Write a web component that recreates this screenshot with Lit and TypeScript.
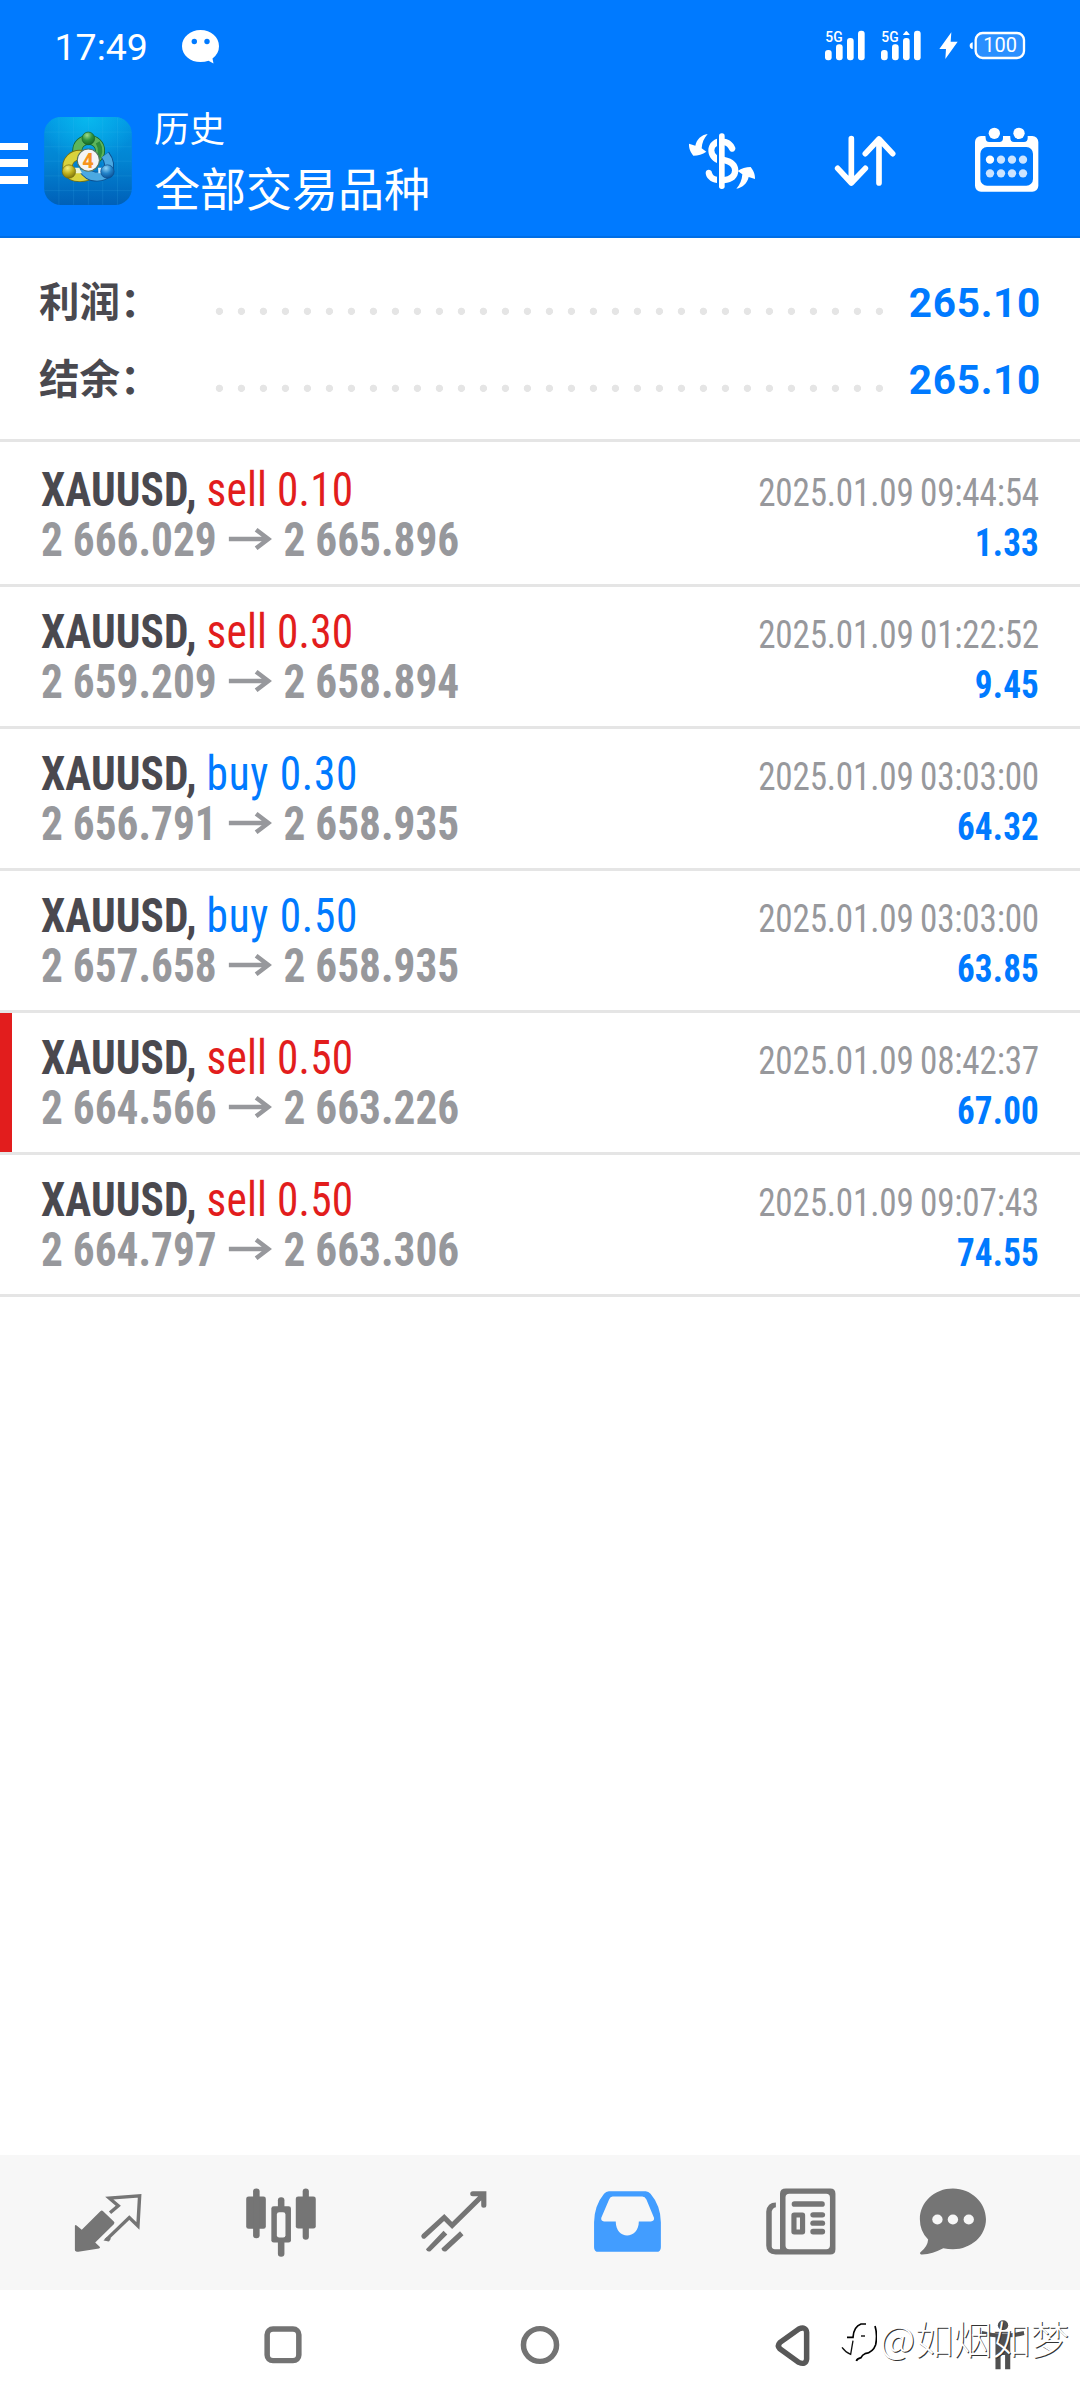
import { LitElement, html, svg, css, nothing } from "lit";
import { customElement, property } from "lit/decorators.js";
import { classMap } from "lit/directives/class-map.js";

interface Deal {
  side: "sell" | "buy";
  volume: string;
  open: string;
  close: string;
  time: string;
  profit: string;
  marked?: boolean;
}

const DEALS: Deal[] = [
  { side: "sell", volume: "0.10", open: "2 666.029", close: "2 665.896", time: "2025.01.09 09:44:54", profit: "1.33" },
  { side: "sell", volume: "0.30", open: "2 659.209", close: "2 658.894", time: "2025.01.09 01:22:52", profit: "9.45" },
  { side: "buy", volume: "0.30", open: "2 656.791", close: "2 658.935", time: "2025.01.09 03:03:00", profit: "64.32" },
  { side: "buy", volume: "0.50", open: "2 657.658", close: "2 658.935", time: "2025.01.09 03:03:00", profit: "63.85" },
  { side: "sell", volume: "0.50", open: "2 664.566", close: "2 663.226", time: "2025.01.09 08:42:37", profit: "67.00", marked: true },
  { side: "sell", volume: "0.50", open: "2 664.797", close: "2 663.306", time: "2025.01.09 09:07:43", profit: "74.55" },
];

@customElement("status-bar")
class StatusBar extends LitElement {
  static styles = css`
    :host { display: flex; height: 92px; box-sizing: border-box; padding: 24px 35px 0 54.500px; color: #fff; }
    .time { font: 400 37.500px/46px Roboto, sans-serif; width: 127.500px; }
    .chat { width: 40px; height: 42px; }
    .system { margin-left: auto; width: 230px; height: 42px; }
    text { fill: #fff; font-family: Roboto, sans-serif; }
  `;

  bars(x: number, split = false) {
    return svg`
      <text x=${x + 1} y="125" font-size="45" font-weight="500" textLength="52" lengthAdjust="spacingAndGlyphs">5G</text>
      <rect x=${x} y="150" width="20" height="31" rx="9" fill="#fff"/>
      <rect x=${x + 33} y="133" width="20" height="48" rx="9" fill="#fff"/>
      <rect x=${x + 66} y="114" width="20" height="67" rx="9" fill="#fff"/>
      <rect x=${x + 99} y="92" width="20" height="89" rx="9" fill="#fff"/>
      ${split ? svg`<path d="M${x + 66} 105q0 -3 4 -6q4 -6 6 -6t6 6q4 3 4 6z" fill="#fff"/>` : nothing}`;
  }

  render() {
    return html`
      <span class="time">17:49</span>
      <svg class="chat" viewBox="0 0 40 42">
        <path fill="#fff" d="M18.5 6C8.500 6 0 13 0 22.200S8.500 38 18.500 38q4.500 0 8 -1.200L31.500 39.500l-1 -5Q37 29.500 37 22.200C37 13 29 6 18.500 6z"/>
        <circle cx="12.300" cy="17.500" r="2.700" fill="#007aff"/>
        <circle cx="25" cy="17.500" r="2.700" fill="#007aff"/>
      </svg>
      <svg class="system" viewBox="525 72 690 126">
        ${this.bars(555)} ${this.bars(723, true)}
        <path fill="#fff" d="M934 97L898 147h20l-2 30L953 125H932z"/>
        <path fill="#fff" d="M998 127q-9 2 -9 10t9 10z"/>
        <rect x="1007" y="99" width="145" height="75" rx="21" fill="#2a8fff" stroke="#fff" stroke-width="7"/>
        <text x="1030" y="157" font-size="60" font-weight="450" textLength="101" lengthAdjust="spacingAndGlyphs">100</text>
      </svg>`;
  }
}

@customElement("history-header")
class HistoryHeader extends LitElement {
  static styles = css`
    :host { display: flex; height: 146px; box-sizing: border-box; border-bottom: 2px solid #006ee5; color: #fff; padding-right: 36px; }
    .menu { width: 28px; height: 41px; margin-top: 50.500px; display: flex; flex-direction: column; justify-content: space-between; }
    .bar { height: 7.500px; background: #fff; }
    .logo { width: 88px; height: 88px; margin: 25px 0 0 16px; }
    .titles { margin: 13px auto 0 22px; font-family: Roboto, "Noto Sans CJK SC", sans-serif; }
    .caption { font-size: 35.500px; line-height: 50px; }
    .title { font-size: 46px; line-height: 70px; }
    .actions { display: flex; gap: 70px; padding-top: 34px; }
    .action { height: 70px; display: block; }
    .w76 { width: 76px; }
    .w70 { width: 70px; }
    .w74 { width: 74px; }
  `;

  render() {
    return html`
      <div class="menu"><div class="bar"></div><div class="bar"></div><div class="bar"></div></div>
      <svg class="logo" viewBox="43 52 262 263">
        <defs>
          <linearGradient id="bg" x1="0" y1="0" x2="0" y2="1">
            <stop offset="0" stop-color="#0298e4"/><stop offset=".5" stop-color="#0284d2"/><stop offset="1" stop-color="#0060b8"/>
          </linearGradient>
          <radialGradient id="glow" cx=".5" cy="0" r=".55">
            <stop offset="0" stop-color="#08b8ee"/><stop offset="1" stop-color="#08b8ee" stop-opacity="0"/>
          </radialGradient>
          <radialGradient id="g" cx=".4" cy=".25" r=".8"><stop offset="0" stop-color="#9fdc8c"/><stop offset=".5" stop-color="#2f9440"/><stop offset="1" stop-color="#126322"/></radialGradient>
          <radialGradient id="y" cx=".4" cy=".25" r=".8"><stop offset="0" stop-color="#f4ef7c"/><stop offset=".5" stop-color="#bfb11f"/><stop offset="1" stop-color="#756c0a"/></radialGradient>
          <radialGradient id="b" cx=".4" cy=".25" r=".8"><stop offset="0" stop-color="#90d3f7"/><stop offset=".5" stop-color="#2383c9"/><stop offset="1" stop-color="#0a4c90"/></radialGradient>
        </defs>
        <rect x="43" y="52" width="262" height="263" rx="50" fill="url(#bg)"/>
        <rect x="43" y="52" width="262" height="263" rx="50" fill="url(#glow)"/>
        <path d="M44 97H304M44 141H304M44 184H304M44 228H304M44 272H304M87 53V314M131 53V314M175 53V314M218 53V314M262 53V314" stroke="#4fc0ef" stroke-opacity=".22" stroke-width="2"/>
        <ellipse cx="176" cy="152" rx="34" ry="32" fill="none" stroke="#17652b" stroke-width="30"/>
        <ellipse cx="176" cy="152" rx="34" ry="32" fill="none" stroke="#5cb55c" stroke-width="25"/>
        <path d="M203 128q16 28 -4 55" fill="none" stroke="#2e8d3c" stroke-width="13"/>
        <path d="M165 168C128 158 106 185 115 213Q122 231 150 231Q172 231 190 218" fill="none" stroke="#77700e" stroke-width="31"/>
        <path d="M165 168C128 158 106 185 115 213Q122 231 150 231Q172 231 190 218" fill="none" stroke="#d9d23c" stroke-width="26"/>
        <path d="M225 165Q244 190 233 216Q222 232 195 230Q173 228 159 206" fill="none" stroke="#0c4f8f" stroke-width="29"/>
        <path d="M225 165Q244 190 233 216Q222 232 195 230Q173 228 159 206" fill="none" stroke="#4ba9e2" stroke-width="24"/>
        <path d="M126 204h22l8 16h-22z" fill="#eef6d8"/><path d="M204 204h22l-6 16h-15z" fill="#d8f0ff"/>
        <circle cx="175" cy="116" r="19" fill="url(#g)" stroke="#186126" stroke-width="2"/>
        <circle cx="117" cy="215" r="20" fill="url(#y)" stroke="#726a0d" stroke-width="2"/>
        <circle cx="232" cy="215" r="20" fill="url(#b)" stroke="#0d4d8c" stroke-width="2"/>
        <circle cx="175" cy="181" r="33" fill="#f4f4f6" stroke="#54735e" stroke-width="3"/>
        <text x="174" y="203" text-anchor="middle" font-family="Roboto, sans-serif" font-weight="800" font-size="60" fill="#f7941e">4</text>
      </svg>
      <div class="titles">
        <div class="caption">历史</div>
        <div class="title">全部交易品种</div>
      </div>
      <div class="actions">
        <svg class="action w76" viewBox="0 0 228 210" fill="#fff">
          <rect x="105" y="22" width="17" height="167" rx="8"/>
          <path d="M99 38C82 44 73 57 73 73S82 104 99 111V88Q91 82 91 73T99 60z"/>
          <path d="M120 38C138 40 148 50 154 65C156 74 143 84 136 72Q131 60 120 58z"/>
          <path d="M120 92C150 98 163 114 163 133C163 156 147 170 120 172V153Q144 150 144 133Q144 118 120 112z"/>
          <path d="M99 171C78 168 66 155 65 141C65 129 82 128 84 140Q87 150 99 152z"/>
          <path d="M71 24C52 27 38 40 34 59L15 53C14 68 21 80 28 89C42 89 56 85 67 77L53 67C54 50 60 36 71 24z"/>
          <path transform="rotate(180 114 106)" d="M71 24C52 27 38 40 34 59L15 53C14 68 21 80 28 89C42 89 56 85 67 77L53 67C54 50 60 36 71 24z"/>
        </svg>
        <svg class="action w70" viewBox="570 378 210 210" fill="none" stroke="#fff" stroke-width="17" stroke-linecap="round" stroke-linejoin="round">
          <path d="M634 416V548M593 505L634 549L676 505M717 549V418M676 461L717 417L758 461"/>
        </svg>
        <svg class="action w74" viewBox="990 378 222 210">
          <rect x="1005" y="408" width="190" height="167" rx="18" fill="#fff"/>
          <rect x="1021" y="441" width="158" height="116" rx="20" fill="#007aff"/>
          <path d="M1035 400H1089V414Q1089 426 1078 426H1048Q1037 426 1037 414zM1110 400H1163V414Q1163 426 1152 426H1122Q1111 426 1111 414z" fill="#007aff"/>
          <circle cx="1063" cy="400" r="17" fill="#fff"/><circle cx="1137" cy="400" r="17" fill="#fff"/>
          ${[0, 1, 2, 3, 4, 5, 6, 7].map(i => svg`<circle cx=${1050 + (i % 4) * 33} cy=${i < 4 ? 479 : 520} r="12.500" fill=${i ? "#cce4ff" : "#fff"}/>`)}
        </svg>
      </div>`;
  }
}

@customElement("summary-row")
class SummaryRow extends LitElement {
  @property() label = "";
  @property() value = "";
  static styles = css`
    :host { display: flex; height: 77px; align-items: center; padding: 0 39px 0 39px; }
    .label { width: 169px; padding-bottom: 6px; font: 700 40.500px/60px "Noto Sans CJK SC", sans-serif; color: #4a494f; white-space: nowrap; }
    .dots { width: 682px; height: 77px; background: radial-gradient(circle at 11.400px 47.300px, #e5e5e5 3.300px, transparent 4px) repeat-x; background-size: 22px 77px; }
    .value { margin-left: auto; font: 700 40.500px/60px Roboto, sans-serif; letter-spacing: .700px; color: #007aff; }
  `;
  render() {
    return html`<span class="label">${this.label}</span><span class="dots"></span><span class="value">${this.value}</span>`;
  }
}

@customElement("deal-row")
class DealRow extends LitElement {
  @property({ attribute: false }) deal!: Deal;
  static styles = css`
    :host { display: block; border-bottom: 3px solid #e5e5e5; }
    .row { display: flex; justify-content: space-between; height: 139px; box-sizing: border-box; padding: 19.500px 41px 0 41px; font-family: Roboto, sans-serif; font-stretch: condensed; line-height: 50px; white-space: nowrap; }
    .row.marked { border-left: 12px solid #e21d1d; padding-left: 29px; }
    .left { font-size: 48px; transform: scaleX(.902); transform-origin: left; }
    .right { font-size: 39px; padding-top: 3px; text-align: right; transform: scaleX(.9); transform-origin: right; }
    .symbol { font-weight: 700; color: #4a494f; letter-spacing: .100px; }
    .side { font-weight: 440; letter-spacing: .150px; }
    .sell { color: #e21d1d; }
    .buy { color: #007aff; letter-spacing: .800px; }
    .prices { display: flex; align-items: center; font-weight: 700; color: #97989c; }
    .arrow { width: 48px; height: 22px; margin: 0 13px; padding-bottom: 2px; }
    .time { color: #97989c; font-weight: 430; letter-spacing: -.200px; word-spacing: -1.500px; }
    .profit { font-weight: 700; color: #007aff; letter-spacing: .200px; }
  `;
  render() {
    const d = this.deal;
    return html`
      <div class=${classMap({ row: true, marked: !!d.marked })}>
        <div class="left">
          <div><span class="symbol">XAUUSD,</span> <span class="side ${d.side}">${d.side} ${d.volume}</span></div>
          <div class="prices"><span>${d.open}</span>
            <svg class="arrow" viewBox="0 0 126 66" preserveAspectRatio="none"><path d="M0 33H114M80 5L116 33L80 61" fill="none" stroke="#97989c" stroke-width="13"/></svg>
            <span>${d.close}</span></div>
        </div>
        <div class="right">
          <div class="time">${d.time}</div>
          <div class="profit">${d.profit}</div>
        </div>
      </div>`;
  }
}

const TABS = [
  { x: 199, art: svg`
    <path d="M219 256Q220 252 224 255L239 268L293 212Q297 208 301 212L332 243Q336 247 332 251L278 306L291 319Q294 322 289 324L229 334Q219 334 219 328z"/>
    <path d="M321 217L345 196L319 173L407 166L402 256L377 231L309 299" fill="none" stroke="#757575" stroke-width="10"/><path d="M302 300L318 303L324 294L311 290z"/>` },
  { x: 699.9, art: svg`
    <rect x="715" y="168" width="57" height="97" rx="7"/><rect x="735" y="144" width="19" height="149" rx="9"/>
    <rect x="859" y="168" width="58" height="96" rx="7"/><rect x="879" y="144" width="18" height="154" rx="9"/>
    <rect x="788" y="197" width="57" height="109" rx="7"/><rect x="807" y="170" width="19" height="179" rx="9"/>
    <rect x="804" y="215" width="25" height="76" rx="7" fill="#f7f7f7"/>` },
  { x: 1202.3, art: svg`
    <g fill="none" stroke="#757575" stroke-width="15" stroke-linecap="round">
    <path d="M1231 287L1290 231L1313 255L1402 164M1373 160H1405V194"/></g>
    <path d="M1288 271L1299 282L1250 332Q1241 336 1237 326zM1336 272L1346 284L1296 332Q1285 336 1282 324z"/>` },
  { x: 136.5, art: svg`
    <path fill="#429dff" fill-rule="evenodd" d="M200 152H307Q315 152 321 160Q350 195 351 245V320Q351 334 338 334H170Q157 334 157 320V245Q158 195 186 160Q192 152 200 152zM211 168Q204 168 201 176L178 232Q176 242 186 243H220C220 270 236 285 253 285S287 270 287 243H322Q333 242 331 232L309 177Q305 168 297 168z"/>` },
  { x: 638.9, art: svg`
    <path d="M685 186V200Q675 202 673 213V318Q674 326 682 326H697V342H684Q657 340 657 315V213Q660 186 685 186z"/>
    <path fill-rule="evenodd" d="M714 144H843Q858 144 858 160V326Q858 342 843 342H697V160Q697 144 714 144zM724 160Q713 160 713 171V315Q713 326 724 326H831Q842 326 842 315V171Q842 160 831 160z"/>
    <rect x="731" y="182" width="96" height="17" rx="8"/>
    <path fill-rule="evenodd" d="M738 216H762Q770 216 770 224V274Q770 282 762 282H738Q730 282 730 274V224Q730 216 738 216zM745 231V267H755V231z"/>
    <rect x="785" y="215" width="43" height="16" rx="8"/><rect x="785" y="240" width="43" height="16" rx="8"/><rect x="785" y="265" width="43" height="17" rx="8"/>` },
  { x: 1083.1, art: svg`
    <path d="M1199 144C1145 144 1103 185 1103 236Q1103 272 1127 297Q1126 318 1104 336Q1102 342 1110 342Q1140 340 1171 323Q1185 326 1199 326C1253 326 1295 285 1295 236S1253 144 1199 144z"/>
    <circle cx="1154" cy="237" r="15" fill="#f7f7f7"/><circle cx="1199" cy="237" r="15" fill="#f7f7f7"/><circle cx="1245" cy="237" r="15" fill="#f7f7f7"/>` },
];

@customElement("tab-bar")
class TabBar extends LitElement {
  static styles = css`
    :host { display: grid; grid-template-columns: repeat(5, 172.900px) 133px; justify-items: center; align-items: center; height: 135px; padding-left: 22px; background: #f7f7f7; fill: #757575; }
    .icon { width: 80px; height: 80px; display: block; }
  `;
  render() {
    return TABS.map(t => html`<svg class="icon" viewBox="${t.x} 127.500 232.300 240" preserveAspectRatio="none">${t.art}</svg>`);
  }
}

@customElement("nav-bar")
class NavBar extends LitElement {
  static styles = css`
    :host { display: flex; position: relative; height: 110px; background: #fff; padding-left: 253px; align-items: center; box-sizing: border-box; }
    svg { display: block; flex: none; fill: none; stroke: #737373; stroke-width: 16; }
    .key { width: 60px; height: 60px; }
    .home { margin-left: 197px; }
    .back { margin-left: 192px; stroke: #585858; }
    .person { width: 60px; height: 60px; margin-left: 151px; stroke: none; fill: #505050; }
    .mark { position: absolute; left: 839px; top: 19px; display: flex; align-items: center; color: #fff; font: 300 38.500px/46px "Noto Sans CJK SC", sans-serif; text-shadow: 1px 1px 0 #333; white-space: nowrap; }
    .note { width: 38px; height: 46px; margin: 9px 3px 0 0; stroke: none; }
  `;
  render() {
    return html`
      <svg class="key" viewBox="734.900 525 174.200 180" preserveAspectRatio="none"><rect x="776" y="567" width="92" height="95" rx="17"/></svg>
      <svg class="key home" viewBox="-87.100 525 174.200 180" preserveAspectRatio="none"><ellipse cx="0" cy="615" rx="48" ry="49"/></svg>
      <svg class="key back" viewBox="645.400 525 174.200 180" preserveAspectRatio="none"><path d="M697 608L752 567Q773 558 775 577V657Q773 676 752 667L697 626Q689 617 697 608z"/></svg>
      <svg class="person" viewBox="1257.800 525 174.200 180" preserveAspectRatio="none">
        <circle cx="1345" cy="556" r="15"/>
        <path d="M1284 573Q1345 588 1405 573L1407 585Q1390 591 1366 592V688H1351V645H1338V688H1323V592Q1300 591 1282 585z"/>
      </svg>
      <div class="mark">
        <svg class="note" viewBox="0 0 114 138">
          <path d="M9 88Q20 103 35 109L42 68" stroke="#111" stroke-width="4"/>
          <path d="M24 58H42Q44 26 66 18H81" stroke="#000" stroke-width="5"/>
          <path d="M66 54H78" stroke="#000" stroke-width="4"/>
          <path d="M108 24Q116 50 110 80Q102 103 78 107Q70 110 66 119Q54 122 52 129" stroke="#000" stroke-width="5"/>
        </svg>
        <span>@如烟如梦</span>
      </div>`;
  }
}

@customElement("app-root")
class AppRoot extends LitElement {
  static styles = css`
    :host { display: flex; flex-direction: column; width: 1080px; height: 2400px; background: #fff; overflow: hidden; }
    .top { background: #007aff; }
    .summary { padding: 26px 0 21px; border-bottom: 3px solid #e5e5e5; }
    .deals { flex: 1; }
    .first { padding-top: 3px; }
  `;
  render() {
    return html`
      <div class="top"><status-bar></status-bar><history-header></history-header></div>
      <div class="summary">
        <summary-row label="利润：" value="265.10"></summary-row>
        <summary-row label="结余：" value="265.10"></summary-row>
      </div>
      <div class="deals">
        ${DEALS.map((d, i) => html`<deal-row class=${i ? "" : "first"} .deal=${d}></deal-row>`)}
      </div>
      <tab-bar></tab-bar>
      <nav-bar></nav-bar>`;
  }
}
